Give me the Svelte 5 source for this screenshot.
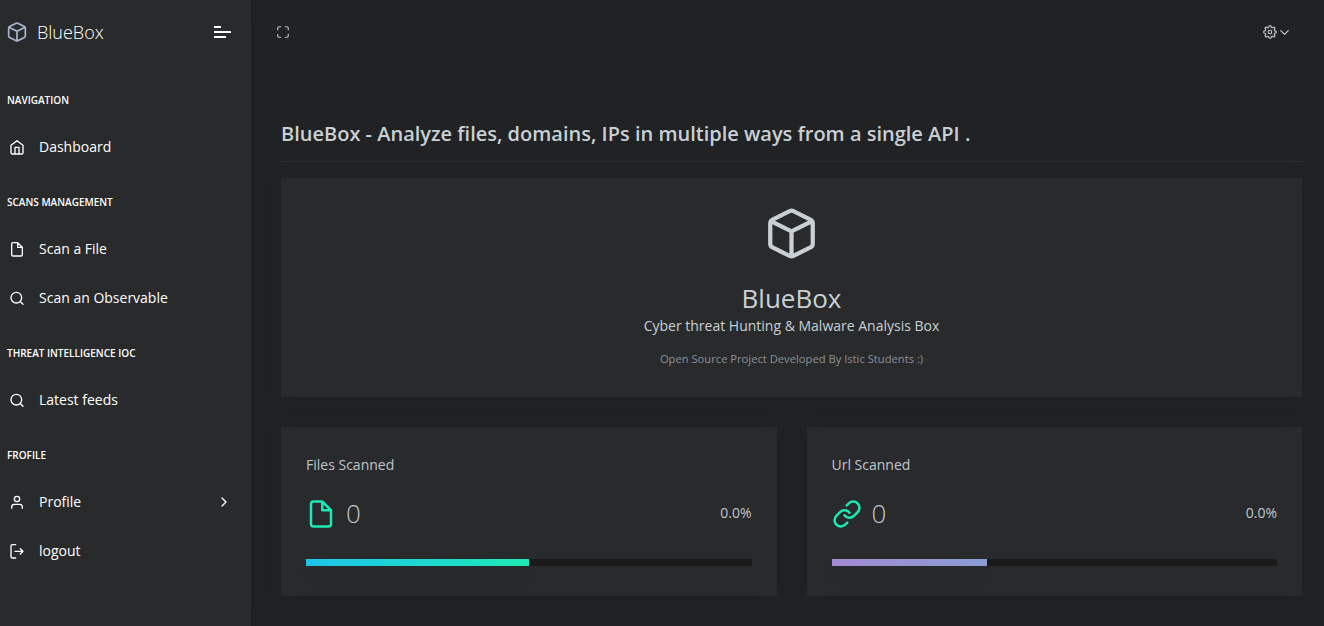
<script>
  const groups = [
    { title: 'Navigation', items: [{ icon: 'home', label: 'Dashboard' }] },
    {
      title: 'Scans Management',
      items: [
        { icon: 'file', label: 'Scan a File' },
        { icon: 'search', label: 'Scan an Observable' }
      ]
    },
    { title: 'Threat intelligence IOC', items: [{ icon: 'search', label: 'Latest feeds' }] },
    {
      title: 'Frofile',
      items: [
        { icon: 'user', label: 'Profile', more: true },
        { icon: 'logout', label: 'logout' }
      ]
    }
  ];

  const stats = [
    { title: 'Files Scanned', icon: 'file', value: 0, percent: '0.0%', fill: 50, tone: 'teal' },
    { title: 'Url Scanned', icon: 'link', value: 0, percent: '0.0%', fill: 35, tone: 'violet' }
  ];

  const icons = {
    box: 'M12.89 1.45l8 4A2 2 0 0 1 22 7.24v9.53a2 2 0 0 1-1.11 1.79l-8 4a2 2 0 0 1-1.79 0l-8-4a2 2 0 0 1-1.1-1.8V7.24a2 2 0 0 1 1.11-1.79l8-4a2 2 0 0 1 1.78 0zM2.32 6.16L12 11l9.68-4.84M12 22.76V11',
    home: 'M3 9l9-7 9 7v11a2 2 0 0 1-2 2H5a2 2 0 0 1-2-2zM9 22V12h6v10',
    file: 'M13 2H6a2 2 0 0 0-2 2v16a2 2 0 0 0 2 2h12a2 2 0 0 0 2-2V9zM13 2v7h7',
    search: 'M19 11a8 8 0 1 1-16 0 8 8 0 0 1 16 0zM21 21l-4.35-4.35',
    user: 'M20 21v-2a4 4 0 0 0-4-4H8a4 4 0 0 0-4 4v2M16 7a4 4 0 1 1-8 0 4 4 0 0 1 8 0z',
    logout: 'M10 22H5a2 2 0 0 1-2-2V4a2 2 0 0 1 2-2h5M17 16l4-4-4-4M21 12H9',
    right: 'M9 18l6-6-6-6',
    down: 'M6 9l6 6 6-6',
    maximize: 'M8 3H5a2 2 0 0 0-2 2v3m18 0V5a2 2 0 0 0-2-2h-3m0 18h3a2 2 0 0 0 2-2v-3M3 16v3a2 2 0 0 0 2 2h3',
    link: 'M10 13a5 5 0 0 0 7.54.54l3-3a5 5 0 0 0-7.07-7.07l-1.72 1.71M14 11a5 5 0 0 0-7.54-.54l-3 3a5 5 0 0 0 7.07 7.07l1.71-1.71',
    settings:
      'M15 12a3 3 0 1 1-6 0 3 3 0 0 1 6 0zM19.4 15a1.65 1.65 0 0 0 .33 1.82l.06.06a2 2 0 0 1-2.83 2.83l-.06-.06a1.65 1.65 0 0 0-1.82-.33 1.65 1.65 0 0 0-1 1.51V21a2 2 0 0 1-4 0v-.09A1.65 1.65 0 0 0 9 19.4a1.65 1.65 0 0 0-1.82.33l-.06.06a2 2 0 0 1-2.83-2.83l.06-.06a1.65 1.65 0 0 0 .33-1.82 1.65 1.65 0 0 0-1.51-1H3a2 2 0 0 1 0-4h.09A1.65 1.65 0 0 0 4.6 9a1.65 1.65 0 0 0-.33-1.82l-.06-.06a2 2 0 0 1 2.83-2.83l.06.06a1.65 1.65 0 0 0 1.82.33H9a1.65 1.65 0 0 0 1-1.51V3a2 2 0 0 1 4 0v.09a1.65 1.65 0 0 0 1 1.51 1.65 1.65 0 0 0 1.82-.33l.06-.06a2 2 0 0 1 2.83 2.83l-.06.06a1.65 1.65 0 0 0-.33 1.82V9a1.65 1.65 0 0 0 1.51 1H21a2 2 0 0 1 0 4h-.09a1.65 1.65 0 0 0-1.51 1z'
  };
</script>

{#snippet icon(name, size)}
  <svg class="icon" width={size} height={size} viewBox="0 0 24 24" aria-hidden="true">
    <path d={icons[name]} />
  </svg>
{/snippet}

<div class="app">
  <aside class="sidebar">
    <div class="brand">
      <span class="logo">{@render icon('box', 20)}</span>
      <span class="brand-name">BlueBox</span>
      <button class="burger" aria-label="Toggle menu"><i></i><i></i><i></i></button>
    </div>
    <nav>
      {#each groups as group}
        <h6>{group.title}</h6>
        {#each group.items as item}
          <a class="item" href="#top">
            <svg class="icon" width="16" height="16" viewBox="0 -0.5 24 24" aria-hidden="true">
              <path d={icons[item.icon]} />
            </svg>
            <span>{item.label}</span>
            {#if item.more}<span class="more">{@render icon('right', 16)}</span>{/if}
          </a>
        {/each}
      {/each}
    </nav>
  </aside>

  <div class="content">
    <header>
      {@render icon('maximize', 14)}
      <div class="tools">{@render icon('settings', 14)}{@render icon('down', 15)}</div>
    </header>
    <main>
      <h1>BlueBox - Analyze files, domains, IPs in multiple ways from a single API .</h1>
      <section class="card hero">
        {@render icon('box', 51)}
        <h2>BlueBox</h2>
        <p>Cyber threat Hunting &amp; Malware Analysis Box</p>
        <small>Open Source Project Developed By Istic Students :)</small>
      </section>
      <div class="stats">
        {#each stats as stat}
          <section class="card stat">
            <h3>{stat.title}</h3>
            <div class="figures">
              <span class="accent">{@render icon(stat.icon, 30)}</span>
              <span class="value">{stat.value}</span>
              <span class="percent">{stat.percent}</span>
            </div>
            <div class="track"><div class="bar {stat.tone}" style="width: {stat.fill}%"></div></div>
          </section>
        {/each}
      </div>
    </main>
  </div>
</div>

<style>
  :global(body) {
    background: #212224;
    overflow: hidden;
  }
  .app {
    display: flex;
    height: 626px;
    overflow: hidden;
    background: #212224;
    color: #bfc6cc;
    font: 400 14px/21px 'Open Sans', sans-serif;
  }
  .app * {
    box-sizing: border-box;
  }
  h1, h2, h3, h6, p {
    margin: 0;
    font-weight: 400;
  }
  .icon {
    display: block;
    flex: none;
    overflow: visible;
    fill: none;
    stroke: currentColor;
    stroke-width: 2;
    stroke-linecap: round;
    stroke-linejoin: round;
  }
  .sidebar {
    flex: none;
    width: 251px;
    background: #292a2c;
    box-shadow: 1px 0 20px rgba(0, 0, 0, 0.08);
    color: #fff;
  }
  .brand {
    display: flex;
    align-items: center;
    height: 64px;
    padding: 0 20px 0 7px;
  }
  .logo {
    color: #a9b7d0;
  }
  .brand-name {
    margin-left: 10px;
    font-size: 18px;
    font-weight: 300;
  }
  .burger {
    display: flex;
    flex-direction: column;
    gap: 3px;
    width: 17px;
    margin-left: auto;
    padding: 0;
    border: 0;
    background: none;
  }
  .burger i {
    height: 2px;
    background: #fff;
  }
  .burger i:first-child {
    width: 7px;
  }
  .burger i:last-child {
    width: 12px;
  }
  nav {
    padding-top: 9px;
  }
  h6 {
    height: 53px;
    padding: 17px 7px 0;
    font-size: 10px;
    line-height: 20px;
    font-weight: 600;
    text-transform: uppercase;
  }
  .item {
    display: flex;
    align-items: center;
    height: 49px;
    padding: 0 19px 7px 9px;
    color: #fff;
    text-decoration: none;
  }
  .item span {
    margin: 0 0 1px 14px;
  }
  .item .more {
    margin: 0 0 0 auto;
  }
  .content {
    flex: 1;
    min-width: 0;
  }
  header {
    display: flex;
    align-items: center;
    justify-content: space-between;
    height: 64px;
    padding: 0 32px 0 25px;
  }
  .tools {
    display: flex;
    align-items: center;
  }
  main {
    padding: 55px 22px 0 30px;
  }
  h1 {
    height: 43px;
    border-bottom: 1px solid #2a2b2d;
    color: #c8d0d6;
    font-size: 20px;
    line-height: 30px;
    font-weight: 600;
    white-space: nowrap;
  }
  .card {
    background: #292a2c;
    box-shadow: 0 1px 20px rgba(0, 0, 0, 0.08);
  }
  .hero {
    display: flex;
    flex-direction: column;
    align-items: center;
    height: 219px;
    margin-top: 16px;
    padding-top: 30px;
    color: #c8d0d6;
  }
  h2 {
    margin-top: 24px;
    font-size: 26px;
    line-height: 30px;
  }
  .hero p {
    margin-top: 2px;
  }
  small {
    margin-top: 12px;
    color: #8a9096;
    font-size: 11.2px;
  }
  .stats {
    display: grid;
    grid-template-columns: 1fr 1fr;
    gap: 30px;
    margin-top: 30px;
  }
  .stat {
    height: 169px;
    padding: 27px 25px 0;
  }
  h3 {
    font-size: 14px;
    line-height: 21px;
  }
  .figures {
    display: flex;
    align-items: center;
    height: 38px;
    margin-top: 20px;
  }
  .accent {
    color: #1de9b6;
  }
  .value {
    margin: 0 0 2px 10px;
    font-size: 26px;
    font-weight: 300;
  }
  .percent {
    margin: 0 0 4px auto;
  }
  .track {
    height: 7px;
    margin-top: 26px;
    background: #1b1b1c;
  }
  .bar {
    height: 100%;
    box-shadow: 0 10px 20px rgba(0, 0, 0, 0.05);
  }
  .teal {
    background: linear-gradient(90deg, #1dc4e9, #1de9b6);
  }
  .violet {
    background: linear-gradient(90deg, #a389d4, #899ed4);
  }
</style>
